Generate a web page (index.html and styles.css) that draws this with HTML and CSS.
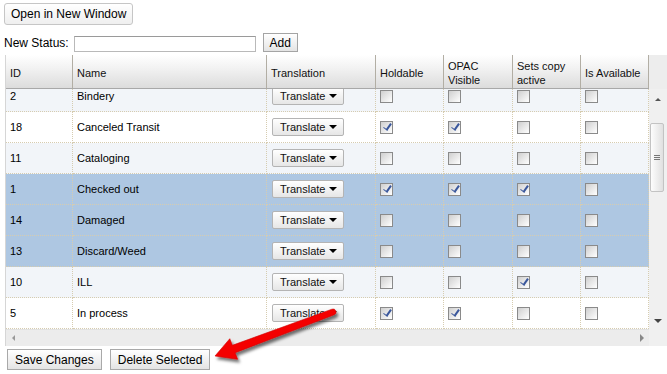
FILE: index.html
```html
<!DOCTYPE html>
<html lang="en">
<head>
    <meta charset="UTF-8">
    <title>Copy Statuses</title>
    <link rel="stylesheet" href="styles.css">
</head>
<body>
    <div class="page">
        <button class="btn open-btn">Open in New Window</button>

        <div class="status-bar">
            <label class="status-label">New Status:</label>
            <input class="status-input" type="text">
            <button class="btn add-btn">Add</button>
        </div>

        <div class="grid">
            <div class="grid-head">
                <div class="head-row">
                    <div class="hcell">ID</div>
                    <div class="hcell">Name</div>
                    <div class="hcell">Translation</div>
                    <div class="hcell">Holdable</div>
                    <div class="hcell">OPAC<br>Visible</div>
                    <div class="hcell">Sets copy<br>active</div>
                    <div class="hcell">Is Available</div>
                </div>
                <div class="head-corner"></div>
            </div>

            <div class="grid-main">
                <div class="grid-view">
                    <div class="rows">
                        <div class="row alt">
                            <div class="cell">2</div>
                            <div class="cell">Bindery</div>
                            <div class="cell"><span class="sel-btn">Translate<i class="caret"></i></span></div>
                            <div class="cell"><span class="cb"></span></div>
                            <div class="cell"><span class="cb"></span></div>
                            <div class="cell"><span class="cb"></span></div>
                            <div class="cell"><span class="cb"></span></div>
                        </div>
                        <div class="row">
                            <div class="cell">18</div>
                            <div class="cell">Canceled Transit</div>
                            <div class="cell"><span class="sel-btn">Translate<i class="caret"></i></span></div>
                            <div class="cell"><span class="cb on"></span></div>
                            <div class="cell"><span class="cb on"></span></div>
                            <div class="cell"><span class="cb"></span></div>
                            <div class="cell"><span class="cb"></span></div>
                        </div>
                        <div class="row alt">
                            <div class="cell">11</div>
                            <div class="cell">Cataloging</div>
                            <div class="cell"><span class="sel-btn">Translate<i class="caret"></i></span></div>
                            <div class="cell"><span class="cb"></span></div>
                            <div class="cell"><span class="cb"></span></div>
                            <div class="cell"><span class="cb"></span></div>
                            <div class="cell"><span class="cb"></span></div>
                        </div>
                        <div class="row selected">
                            <div class="cell">1</div>
                            <div class="cell">Checked out</div>
                            <div class="cell"><span class="sel-btn">Translate<i class="caret"></i></span></div>
                            <div class="cell"><span class="cb on"></span></div>
                            <div class="cell"><span class="cb on"></span></div>
                            <div class="cell"><span class="cb on"></span></div>
                            <div class="cell"><span class="cb"></span></div>
                        </div>
                        <div class="row selected">
                            <div class="cell">14</div>
                            <div class="cell">Damaged</div>
                            <div class="cell"><span class="sel-btn">Translate<i class="caret"></i></span></div>
                            <div class="cell"><span class="cb"></span></div>
                            <div class="cell"><span class="cb"></span></div>
                            <div class="cell"><span class="cb"></span></div>
                            <div class="cell"><span class="cb"></span></div>
                        </div>
                        <div class="row selected">
                            <div class="cell">13</div>
                            <div class="cell">Discard/Weed</div>
                            <div class="cell"><span class="sel-btn">Translate<i class="caret"></i></span></div>
                            <div class="cell"><span class="cb"></span></div>
                            <div class="cell"><span class="cb"></span></div>
                            <div class="cell"><span class="cb"></span></div>
                            <div class="cell"><span class="cb"></span></div>
                        </div>
                        <div class="row alt">
                            <div class="cell">10</div>
                            <div class="cell">ILL</div>
                            <div class="cell"><span class="sel-btn">Translate<i class="caret"></i></span></div>
                            <div class="cell"><span class="cb"></span></div>
                            <div class="cell"><span class="cb"></span></div>
                            <div class="cell"><span class="cb on"></span></div>
                            <div class="cell"><span class="cb"></span></div>
                        </div>
                        <div class="row">
                            <div class="cell">5</div>
                            <div class="cell">In process</div>
                            <div class="cell"><span class="sel-btn">Translate<i class="caret"></i></span></div>
                            <div class="cell"><span class="cb on"></span></div>
                            <div class="cell"><span class="cb on"></span></div>
                            <div class="cell"><span class="cb"></span></div>
                            <div class="cell"><span class="cb"></span></div>
                        </div>
                    </div>
                </div>

                <!-- vertical scrollbar -->
                <div class="vscroll">
                    <div class="vs-up"><i class="tri-up"></i></div>
                    <div class="vs-thumb"><i class="grip"></i></div>
                    <div class="vs-down"><i class="tri-down"></i></div>
                </div>
            </div>

            <!-- horizontal scrollbar -->
            <div class="hscroll-bar">
                <div class="hscroll">
                    <i class="tri-left"></i>
                    <i class="tri-right"></i>
                </div>
                <div class="scroll-corner"></div>
            </div>
        </div>

        <div class="actions">
            <button class="btn action-btn">Save Changes</button>
            <button class="btn action-btn">Delete Selected</button>
        </div>

        <!-- Red callout arrow -->
        <svg class="callout" width="667" height="374" viewBox="0 0 667 374">
            <defs>
                <filter id="shadow" x="-20%" y="-50%" width="140%" height="200%">
                    <feDropShadow dx="2" dy="3" stdDeviation="1.6" flood-color="#000" flood-opacity="0.55"/>
                </filter>
            </defs>
            <path d="M215 356 L229.8 338.7 L232.3 345.3 L331.9 309.2 A3 3 0 0 1 334.1 314.8 L235.1 352.7 L237.6 359.3 Z"
                  fill="#f40000" stroke="#d00000" stroke-width="0.6" filter="url(#shadow)"/>
        </svg>
    </div>
</body>
</html>
```

FILE: styles.css
```css
body {
    margin: 0;
    padding: 0;
    font-family: 'Liberation Sans', Arial, sans-serif;
    background-color: #fff;
    color: #000;
}

.page {
    position: relative;
    width: 667px;
    height: 374px;
    overflow: hidden;
}

/* Buttons */
.btn {
    font-family: 'Liberation Sans', Arial, sans-serif;
    font-size: 12px;
    color: #000;
    background: linear-gradient(#ffffff, #e4e4e4);
    border: 1px solid #a9a9a9;
    padding: 0 6px;
    margin: 0;
    line-height: 1;
}

.open-btn {
    display: block;
    height: 22px;
    margin: 3px 0 0 4px;
    padding: 0 6px;
    border-color: #c6c6c6;
    border-radius: 3px;
    background: linear-gradient(#ffffff, #efefef);
}

.status-bar {
    display: flex;
    align-items: center;
    height: 19px;
    margin-top: 8px;
    padding-left: 4px;
    font-size: 12px;
}

.status-input {
    width: 182px;
    height: 16px;
    box-sizing: border-box;
    margin: 2px 0 0 5px;
    border: 1px solid #b9b9b9;
    border-top-color: #9a9a9a;
    padding: 0 2px;
}

.add-btn {
    height: 19px;
    width: 35px;
    margin-left: 7px;
    padding: 0;
    border-color: #a4a4a4;
}

/* Grid */
.grid {
    margin: 3px 0 0 5px;
    width: 661px;
    border-left: 1px solid #d6d6d6;
}

.grid-head {
    display: flex;
    height: 34px;
}

.head-row,
.row {
    display: grid;
    grid-template-columns: 67px 194px 109px 68px 69px 68px 68px;
}

.head-row {
    width: 643px;
    box-sizing: border-box;
    border-bottom: 1px solid #a8a8a8;
    background: linear-gradient(#ffffff, #f2f2f2 40%, #dcdcdc);
}

.hcell {
    display: flex;
    align-items: center;
    padding: 3px 4px 0;
    border-right: 1px solid #b2aea4;
    font-size: 11px;
    line-height: 14px;
    color: #111;
}

.head-corner {
    width: 18px;
    background: #ededed;
}

.grid-main {
    display: flex;
    height: 240px;
}

.grid-view {
    width: 643px;
    overflow: hidden;
    background: #fff;
}

.rows {
    margin-top: -8px;
}

.row {
    height: 31px;
}

.row.alt {
    background: #f2f5f9;
}

.row.selected {
    background: #aec7e2;
}

.cell {
    display: flex;
    align-items: center;
    padding: 0 4px;
    border-right: 1px dotted #d6ccb0;
    border-bottom: 1px dotted #d6ccb0;
    font-size: 11px;
    white-space: nowrap;
    overflow: hidden;
}

/* Translate dropdown button */
.sel-btn {
    display: flex;
    align-items: center;
    justify-content: space-between;
    width: 72px;
    height: 18px;
    box-sizing: border-box;
    margin-left: 1px;
    padding: 0 6px 0 7px;
    border: 1px solid #b4b4b4;
    border-radius: 2px;
    background: linear-gradient(#ffffff, #e6e6e6);
    color: #111;
}

.caret {
    width: 0;
    height: 0;
    border-left: 4px solid transparent;
    border-right: 4px solid transparent;
    border-top: 4px solid #000;
}

/* Checkboxes */
.cb {
    position: relative;
    width: 13px;
    height: 13px;
    box-sizing: border-box;
    border: 1px solid #8a8a8a;
    background: linear-gradient(135deg, #cfcfcf, #ffffff);
}

.cb.on::after {
    content: "";
    position: absolute;
    left: 4px;
    top: 0;
    width: 3px;
    height: 7px;
    border-right: 2px solid #3a579c;
    border-bottom: 1.5px solid #3a579c;
    transform: rotate(35deg);
}

/* Scrollbars */
.vscroll {
    width: 18px;
    display: flex;
    flex-direction: column;
    background: #f0f0f0;
}

.vs-up {
    height: 20px;
    display: flex;
    align-items: center;
    justify-content: center;
}

.tri-up {
    width: 0;
    height: 0;
    border-left: 3px solid transparent;
    border-right: 3px solid transparent;
    border-bottom: 3px solid #555;
}

.vs-thumb {
    height: 67px;
    margin: 14px 3px 0 1px;
    border: 1px solid #c3c3c3;
    border-radius: 2px;
    background: linear-gradient(90deg, #fdfdfd, #e0e0e0);
    display: flex;
    align-items: center;
    justify-content: center;
}

.grip {
    width: 6px;
    height: 5px;
    background: repeating-linear-gradient(#777 0 1px, transparent 1px 2px);
}

.vs-down {
    margin-top: auto;
    height: 16px;
    display: flex;
    align-items: center;
    justify-content: center;
}

.tri-down {
    width: 0;
    height: 0;
    border-left: 4px solid transparent;
    border-right: 4px solid transparent;
    border-top: 4px solid #444;
}

.hscroll-bar {
    display: flex;
    height: 17px;
}

.hscroll {
    width: 643px;
    display: flex;
    align-items: center;
    justify-content: space-between;
    padding: 0 5px 0 6px;
    box-sizing: border-box;
    background: #ececec;
    border-top: 1px solid #e2e2e2;
}

.tri-left {
    width: 0;
    height: 0;
    border-top: 3px solid transparent;
    border-bottom: 3px solid transparent;
    border-right: 3px solid #999;
}

.tri-right {
    width: 0;
    height: 0;
    border-top: 4px solid transparent;
    border-bottom: 4px solid transparent;
    border-left: 4px solid #888;
}

.scroll-corner {
    width: 18px;
    background: #f0f0f0;
}

/* Bottom actions */
.actions {
    display: flex;
    gap: 8px;
    margin: 3px 0 0 7px;
}

.action-btn {
    height: 21px;
    padding: 0 7px;
}

/* Callout arrow */
.callout {
    position: absolute;
    top: 0;
    left: 0;
    pointer-events: none;
}
```
